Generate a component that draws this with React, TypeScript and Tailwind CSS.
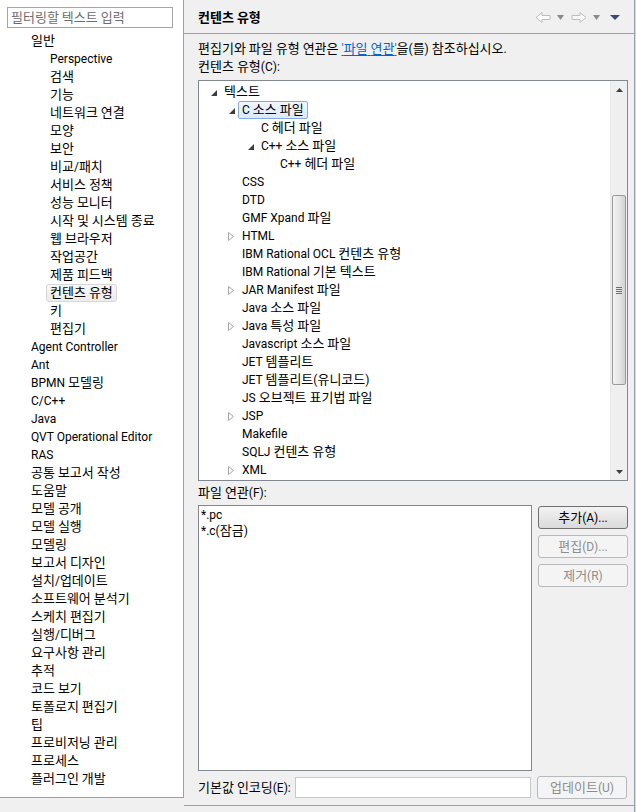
import React from 'react';

type TreeItem = {
  label: string;
  level: number;
  exp?: 'open' | 'closed';
  selected?: boolean;
};

const leftItems: { label: string; child?: boolean; selected?: boolean }[] = [
  { label: '일반' },
  { label: 'Perspective', child: true },
  { label: '검색', child: true },
  { label: '기능', child: true },
  { label: '네트워크 연결', child: true },
  { label: '모양', child: true },
  { label: '보안', child: true },
  { label: '비교/패치', child: true },
  { label: '서비스 정책', child: true },
  { label: '성능 모니터', child: true },
  { label: '시작 및 시스템 종료', child: true },
  { label: '웹 브라우저', child: true },
  { label: '작업공간', child: true },
  { label: '제품 피드백', child: true },
  { label: '컨텐츠 유형', child: true, selected: true },
  { label: '키', child: true },
  { label: '편집기', child: true },
  { label: 'Agent Controller' },
  { label: 'Ant' },
  { label: 'BPMN 모델링' },
  { label: 'C/C++' },
  { label: 'Java' },
  { label: 'QVT Operational Editor' },
  { label: 'RAS' },
  { label: '공통 보고서 작성' },
  { label: '도움말' },
  { label: '모델 공개' },
  { label: '모델 실행' },
  { label: '모델링' },
  { label: '보고서 디자인' },
  { label: '설치/업데이트' },
  { label: '소프트웨어 분석기' },
  { label: '스케치 편집기' },
  { label: '실행/디버그' },
  { label: '요구사항 관리' },
  { label: '추적' },
  { label: '코드 보기' },
  { label: '토폴로지 편집기' },
  { label: '팁' },
  { label: '프로비저닝 관리' },
  { label: '프로세스' },
  { label: '플러그인 개발' },
];

const contentTypes: TreeItem[] = [
  { label: '텍스트', level: 0, exp: 'open' },
  { label: 'C 소스 파일', level: 1, exp: 'open', selected: true },
  { label: 'C 헤더 파일', level: 2 },
  { label: 'C++ 소스 파일', level: 2, exp: 'open' },
  { label: 'C++ 헤더 파일', level: 3 },
  { label: 'CSS', level: 1 },
  { label: 'DTD', level: 1 },
  { label: 'GMF Xpand 파일', level: 1 },
  { label: 'HTML', level: 1, exp: 'closed' },
  { label: 'IBM Rational OCL 컨텐츠 유형', level: 1 },
  { label: 'IBM Rational 기본 텍스트', level: 1 },
  { label: 'JAR Manifest 파일', level: 1, exp: 'closed' },
  { label: 'Java 소스 파일', level: 1 },
  { label: 'Java 특성 파일', level: 1, exp: 'closed' },
  { label: 'Javascript 소스 파일', level: 1 },
  { label: 'JET 템플리트', level: 1 },
  { label: 'JET 템플리트(유니코드)', level: 1 },
  { label: 'JS 오브젝트 표기법 파일', level: 1 },
  { label: 'JSP', level: 1, exp: 'closed' },
  { label: 'Makefile', level: 1 },
  { label: 'SQLJ 컨텐츠 유형', level: 1 },
  { label: 'XML', level: 1, exp: 'closed' },
];

// indent before the expander, per tree level
const indent = ['w-[9px]', 'w-[27px]', 'w-[46px]', 'w-[65px]'];

const Txt = ({ s }: { s: string }) => (
  <span className="whitespace-pre">
    {s.split(/([\uac00-\ud7a3]+)/).map((part, i) =>
      /[\uac00-\ud7a3]/.test(part) ? (
        <span key={i} className="text-[13px]">
          {part}
        </span>
      ) : (
        <React.Fragment key={i}>{part}</React.Fragment>
      )
    )}
  </span>
);

const Expander = ({ exp }: { exp?: 'open' | 'closed' }) => (
  <div className="w-[12px] h-[18px] flex items-center shrink-0">
    {exp === 'open' && (
      <svg width="6" height="6" viewBox="0 0 6 6" className="ml-[3px] mt-[1px]">
        <polygon points="6,0 6,6 0,6" fill="#3d3d3d" />
      </svg>
    )}
    {exp === 'closed' && (
      <svg width="6" height="9" viewBox="0 0 6 9" className="ml-[2px]">
        <polygon points="0.5,0.5 5.5,4.5 0.5,8.5" fill="#fff" stroke="#a6a6a6" />
      </svg>
    )}
  </div>
);

const NavArrow = ({ flip }: { flip?: boolean }) => (
  <svg width="16" height="13" viewBox="0 0 16 13" className={flip ? '-scale-x-100' : ''}>
    <polygon
      points="1,6.5 7,1.5 7,4.5 15,4.5 15,8.5 7,8.5 7,11.5"
      fill="#fbfbfb"
      stroke="#bdbdbd"
      strokeLinejoin="round"
    />
  </svg>
);

const SmallDrop = ({ color = '#8a8a8a', w = 7 }: { color?: string; w?: number }) => (
  <svg width={w} height="5" viewBox={`0 0 ${w} 5`}>
    <polygon points={`0,0 ${w},0 ${w / 2},5`} fill={color} />
  </svg>
);

const Button = ({ label, disabled }: { label: string; disabled?: boolean }) => (
  <button
    className={
      disabled
        ? 'w-[90px] h-[23px] rounded-[3px] border border-[#b5b9bc] bg-[#f4f4f4] text-[#8d8d8d] text-[12px] leading-none'
        : 'w-[90px] h-[23px] rounded-[3px] border border-[#707070] bg-gradient-to-b from-[#f3f3f3] to-[#dadada] text-black text-[12px] leading-none'
    }
  >
    <Txt s={label} />
  </button>
);

export default function App() {
  return (
    <div className="w-[636px] h-[812px] flex bg-[#f0f0f0] overflow-hidden text-[12px] text-black font-['Roboto','Noto_Sans_CJK_KR',sans-serif]">
      {/* Left navigation */}
      <div className="w-[184px] shrink-0">
        <div className="h-[798px] bg-white border-r border-b border-[#a0a0a0] overflow-hidden">
          <div className="pt-[7px] pl-[7px]">
            <div className="w-[166px] h-[21px] border border-[#a5a5a5] flex items-center pl-[3px] text-[#6d6d6d]">
              <Txt s="필터링할 텍스트 입력" />
            </div>
          </div>
          <ul className="mt-[4px]">
            {leftItems.map((it) => (
              <li
                key={it.label}
                className={`h-[18px] flex items-center ${it.child ? 'pl-[46px]' : 'pl-[27px]'}`}
              >
                <span
                  className={`px-[3px] h-[18px] leading-[16px] rounded-[3px] border whitespace-nowrap ${
                    it.selected
                      ? 'border-[#d6d6d6] bg-gradient-to-b from-[#f8f8f8] to-[#ececec]'
                      : 'border-transparent'
                  }`}
                >
                  <Txt s={it.label} />
                </span>
              </li>
            ))}
          </ul>
        </div>
      </div>

      {/* Right page */}
      <div className="flex-1 h-[806px] border-b border-[#a0a0a0] flex flex-col">
        <div className="h-[34px] border-b border-[#a0a0a0] flex items-center pl-[14px] pr-[14px] pt-[2px]">
          <div className="font-bold flex-1">
            <Txt s="컨텐츠 유형" />
          </div>
          <div className="flex items-center">
            <NavArrow />
            <div className="ml-[6px]">
              <SmallDrop />
            </div>
            <div className="ml-[7px]">
              <NavArrow flip />
            </div>
            <div className="ml-[6px]">
              <SmallDrop />
            </div>
            <div className="ml-[10px]">
              <SmallDrop color="#3b4a72" w={10} />
            </div>
          </div>
        </div>

        <div className="pl-[14px] pr-[6px] flex flex-col">
          <div className="mt-[6px] h-[18px] leading-[18px] whitespace-nowrap">
            <Txt s="편집기와 파일 유형 연관은 " />
            <span className="text-[#0066cc] underline underline-offset-2">
              <Txt s="'파일 연관'" />
            </span>
            <Txt s="을(를) 참조하십시오." />
          </div>
          <div className="h-[18px] leading-[18px]">
            <Txt s="컨텐츠 유형(C):" />
          </div>

          {/* content type tree */}
          <div className="mt-[4px] h-[401px] w-[430px] bg-white border border-[#828790] flex">
            <ul className="flex-1 pt-[2px] overflow-hidden">
              {contentTypes.map((t) => (
                <li key={t.label} className="h-[18px] flex items-center">
                  <div className={`${indent[t.level]} shrink-0`} />
                  <Expander exp={t.exp} />
                  <span
                    className={`px-[3px] h-[18px] leading-[16px] rounded-[2px] border whitespace-nowrap ${
                      t.selected
                        ? 'border-[#84acdd] bg-gradient-to-b from-[#f1f7fe] to-[#d9eafb]'
                        : 'border-transparent'
                    }`}
                  >
                    <Txt s={t.label} />
                  </span>
                </li>
              ))}
            </ul>
            <div className="w-[17px] bg-[#efefef] border-l border-[#e8e8e8] flex flex-col">
              <div className="h-[17px] flex items-center justify-center">
                <svg width="7" height="4" viewBox="0 0 7 4">
                  <polygon points="0,4 7,4 3.5,0" fill="#404040" />
                </svg>
              </div>
              <div className="h-[97px]" />
              <div className="h-[190px] mx-[1px] rounded-[2px] border border-[#9a9a9a] bg-gradient-to-r from-[#f3f3f3] via-[#e6e6e6] to-[#d2d2d2] flex items-center justify-center">
                <div className="flex flex-col gap-[1px]">
                  <div className="w-[6px] h-[1px] bg-[#6e6e6e]" />
                  <div className="w-[6px] h-[1px] bg-[#6e6e6e]" />
                  <div className="w-[6px] h-[1px] bg-[#6e6e6e]" />
                  <div className="w-[6px] h-[1px] bg-[#6e6e6e]" />
                </div>
              </div>
              <div className="flex-1" />
              <div className="h-[17px] flex items-center justify-center">
                <svg width="7" height="4" viewBox="0 0 7 4">
                  <polygon points="0,0 7,0 3.5,4" fill="#404040" />
                </svg>
              </div>
            </div>
          </div>

          <div className="mt-[3px] h-[18px] leading-[18px]">
            <Txt s="파일 연관(F):" />
          </div>

          <div className="mt-[3px] flex gap-[6px]">
            <div className="w-[334px] h-[266px] bg-white border border-[#828790] pl-[2px] pt-[1px]">
              <div className="h-[16px] leading-[16px]">*.pc</div>
              <div className="h-[16px] leading-[16px]">
                <Txt s="*.c(잠금)" />
              </div>
            </div>
            <div className="flex flex-col gap-[6px] pt-[1px]">
              <Button label="추가(A)..." />
              <Button label="편집(D)..." disabled />
              <Button label="제거(R)" disabled />
            </div>
          </div>

          <div className="mt-[5px] h-[23px] flex items-center">
            <div className="w-[97px] whitespace-nowrap">
              <Txt s="기본값 인코딩(E):" />
            </div>
            <div className="w-[236px] h-[21px] bg-white border border-[#c5c8cc]" />
            <div className="ml-[6px]">
              <Button label="업데이트(U)" disabled />
            </div>
          </div>
        </div>
      </div>

      <div className="w-[1px] h-full bg-[#9aa3ad]" />
      <div className="w-[2px] h-full bg-[#c9dcf0]" />
    </div>
  );
}
